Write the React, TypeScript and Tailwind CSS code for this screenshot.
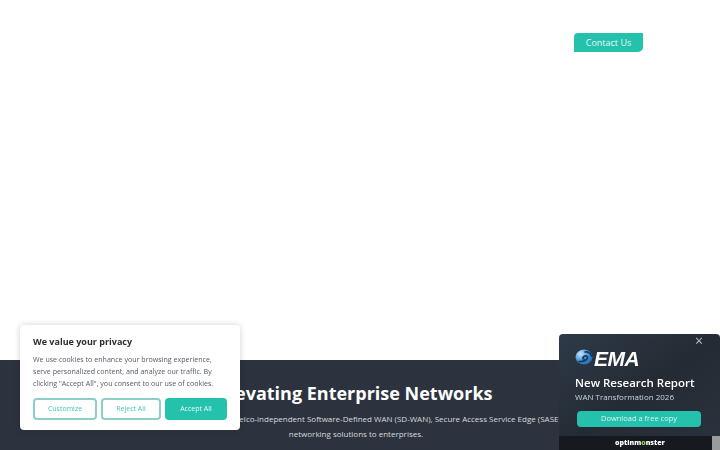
import React from "react";

const font = { sans: "font-['Open_Sans','Noto_Sans',sans-serif]" };

function EmaGlobe() {
  return (
    <svg width="18" height="16" viewBox="0 0 18 16" className="shrink-0">
      <defs>
        <radialGradient id="globe" cx="30%" cy="30%" r="85%">
          <stop offset="0%" stopColor="#cfe6f7" />
          <stop offset="50%" stopColor="#4a97d8" />
          <stop offset="100%" stopColor="#1d5fa3" />
        </radialGradient>
      </defs>
      <ellipse cx="9" cy="8" rx="8.5" ry="7.5" fill="url(#globe)" />
      <path d="M4 12.5C8 13 12.5 11 12.5 8.5C12.5 6.8 10.5 6.5 9 7.5C7.5 8.5 7.5 10 9 10M10 3C12.5 2.8 15.5 4 16.5 7" fill="none" stroke="#123a66" strokeWidth="1.7" strokeLinecap="round" />
    </svg>
  );
}

function CookieCard() {
  return (
    <div className="fixed left-5 bottom-5 w-[220px] h-[105px] bg-white rounded shadow-[0_0_6px_rgba(0,0,0,0.18)] px-[13px] pt-[10px]">
      <h3 className="text-[9px] leading-[14px] font-bold text-[#2a2f36]">We value your privacy</h3>
      <p className="mt-1 text-[7.1px] leading-[12px] text-[#555c66] whitespace-nowrap">
        We use cookies to enhance your browsing experience,
        <br />
        serve personalized content, and analyze our traffic. By
        <br />
        clicking "Accept All", you consent to our use of cookies.
      </p>
      <div className="mt-[9px] flex gap-1">
        <button className="w-16 h-[22px] border-2 border-[#8ccfc6] rounded-sm text-[7px] text-[#4cc4b4]">Customize</button>
        <button className="w-[60px] h-[22px] border-2 border-[#8ccfc6] rounded-sm text-[7px] text-[#4cc4b4]">Reject All</button>
        <button className="w-[62px] h-[22px] bg-[#24c1ad] rounded-sm text-[7px] text-[#e8fbf8]">Accept All</button>
      </div>
    </div>
  );
}

function ReportPopup() {
  return (
    <div className="fixed right-0 bottom-0 w-[161px] h-[116px] rounded-t bg-gradient-to-br from-[#2d3a48] via-[#252b34] to-[#2a323d] flex flex-col">
      <button className="absolute top-0 right-[17px] text-[14px] leading-[14px] text-[#b9c0c8]">×</button>
      <div className="flex-1 px-4 pt-[14px]">
        <div className="flex items-center h-[18px]">
          <EmaGlobe />
          <span className="ml-[1px] mt-[3px] font-['Liberation_Sans',sans-serif] text-[21px] font-bold italic text-white tracking-[-0.5px]">EMA</span>
        </div>
        <p className="mt-[9px] text-[11.5px] leading-[16px] font-semibold text-white whitespace-nowrap">New Research Report</p>
        <p className="text-[8px] leading-[12px] text-[#cfd4da] whitespace-nowrap">WAN Transformation 2026</p>
        <button className="mt-[6px] ml-[2px] w-[124px] h-4 rounded-sm bg-[#24c1ad] text-[7.5px] text-[#d8f5f0]">Download a free copy</button>
      </div>
      <div className="h-[14px] bg-[#16191d] flex justify-between">
        <span className="pl-[56px] text-[7px] leading-[14px] font-extrabold text-white">
          optinm<span className="text-[#8fd14f]">o</span>nster
        </span>
        <div className="w-2 bg-[#9b9b9b]" />
      </div>
    </div>
  );
}

export default function App() {
  return (
    <div className={`h-screen overflow-hidden flex flex-col bg-white ${font.sans}`}>
      <header className="h-[360px] shrink-0 w-[712px] pt-[33px] pr-[69px] flex justify-end items-start">
        <a className="w-[69px] h-[19px] bg-[#24c1ad] rounded-tl-[4px] rounded-br-[5px] text-center text-[9px] leading-[19px] text-[#e8fbf8]">
          Contact Us
        </a>
      </header>
      <section className="flex-1 bg-[#2c333e]">
        <div className="w-[712px] pt-5 text-center">
          <h2 className="text-[18px] leading-[26px] font-bold text-white">Elevating Enterprise Networks</h2>
          <p className="mt-[5px] flex flex-col items-center text-[8px] leading-[15px] text-[#d7dade]">
            <span className="whitespace-nowrap">FatPipe Networks provides telco-independent Software-Defined WAN (SD-WAN), Secure Access Service Edge (SASE) and</span>
            <span>networking solutions to enterprises.</span>
          </p>
        </div>
      </section>
      <CookieCard />
      <ReportPopup />
    </div>
  );
}
